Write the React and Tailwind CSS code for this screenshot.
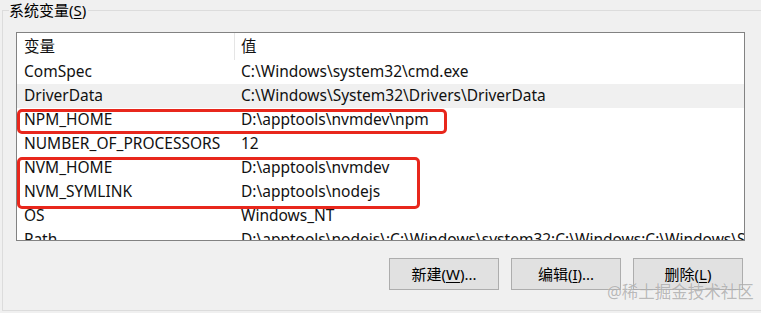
import React from "react";

const rows = [
  ["ComSpec", "C:\\Windows\\system32\\cmd.exe", false],
  ["DriverData", "C:\\Windows\\System32\\Drivers\\DriverData", true],
  ["NPM_HOME", "D:\\apptools\\nvmdev\\npm", false],
  ["NUMBER_OF_PROCESSORS", "12", false],
  ["NVM_HOME", "D:\\apptools\\nvmdev", false],
  ["NVM_SYMLINK", "D:\\apptools\\nodejs", false],
  ["OS", "Windows_NT", false],
  ["Path", "D:\\apptools\\nodejs\\;C:\\Windows\\system32;C:\\Windows;C:\\Windows\\System32\\Wbem", false],
];

const font = { fontFamily: '"Noto Sans", "Noto Sans CJK SC", sans-serif' };

function Btn({ pre, key1, post }) {
  return (
    <button className="w-[110px] h-[32px] border border-[#adadad] bg-[#e1e1e1] text-[15px] text-black flex items-center justify-center leading-none">
      {pre}(<span className="underline underline-offset-2">{key1}</span>){post}
    </button>
  );
}

export default function App() {
  return (
    <div
      className="w-[761px] h-[313px] bg-[#f0f0f0] relative overflow-hidden text-[15px] text-black"
      style={font}
    >
      <div className="pt-[10px] pl-[2px]">
        <div className="relative border-l border-t border-b border-[#dcdcdc] h-[301px] pl-[13px] pt-[21px]">
          <div className="absolute left-[6px] top-[-10px] bg-[#f0f0f0] pr-[2px] leading-[18px] text-[15px]">
            系统变量(<span className="underline underline-offset-2">S</span>)
          </div>
          <div className="w-[729px] h-[209px] border border-[#828282] bg-white flex overflow-hidden text-[15.5px] text-[#111]">
            <div className="flex-1 relative">
              <div className="flex h-[27px] items-center">
                <div className="w-[218px] pl-[7px] border-r border-[#e5e5e5] h-full flex items-center">变量</div>
                <div className="pl-[6px]">值</div>
              </div>
              {rows.map(([k, v, hl]) => (
                <div
                  key={k}
                  className={`flex h-[24px] items-center whitespace-nowrap ${hl ? "bg-[#f0f0f0]" : ""}`}
                >
                  <div className="w-[218px] pl-[7px] shrink-0">{k}</div>
                  <div className="pl-[6px] pr-[1px]">{v}</div>
                </div>
              ))}
              <div className="absolute left-0 top-[76px] w-[430px] h-[25px] border-[3px] border-[#e8271c] rounded-[5px]" />
              <div className="absolute left-0 top-[124px] w-[403px] h-[52px] border-[3px] border-[#e8271c] rounded-[5px]" />
            </div>
            <div className="w-[21px] bg-[#f0f0f0] flex flex-col items-center">
              <div className="h-[22px] w-full flex items-center justify-center">
                <svg width="10" height="6" viewBox="0 0 10 6">
                  <path d="M1 5.5 L5 1.5 L9 5.5" fill="none" stroke="#606060" strokeWidth="1.3" />
                </svg>
              </div>
              <div className="w-[19px] h-[64px] bg-[#c2c2c2]" />
              <div className="flex-1" />
              <div className="h-[22px] w-full flex items-center justify-center">
                <svg width="10" height="6" viewBox="0 0 10 6">
                  <path d="M1 0.5 L5 4.5 L9 0.5" fill="none" stroke="#606060" strokeWidth="1.3" />
                </svg>
              </div>
            </div>
          </div>
          <div className="flex gap-[12px] pl-[373px] pt-[17px]">
            <Btn pre="新建" key1="W" post="..." />
            <Btn pre="编辑" key1="I" post="..." />
            <Btn pre="删除" key1="L" post="" />
          </div>
        </div>
      </div>
      <div
        className="absolute left-[607px] top-[280px] text-[16.5px] leading-[24px] text-[rgba(130,130,130,0.55)] whitespace-nowrap"
        style={{ textShadow: "0 0 1px rgba(255,255,255,0.7)" }}
      >
        @稀土掘金技术社区
      </div>
    </div>
  );
}
